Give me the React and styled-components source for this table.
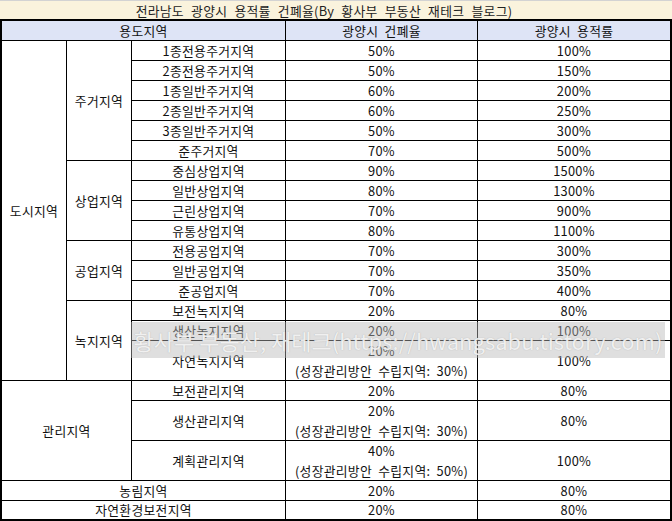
import React from "react";
import styled, { createGlobalStyle } from "styled-components";

const Global = createGlobalStyle`
  html, body { margin: 0; padding: 0; background: #fff; }
  body { font-family: "Noto Sans CJK KR", "Noto Sans", sans-serif; color: #111; }
`;

const Page = styled.div`
  position: relative;
  width: 672px;
`;

const Title = styled.div`
  height: 18px;
  border-top: 1px solid #d3d3d3;
  background: #faf3dd;
  display: flex;
  align-items: center;
  justify-content: center;
  padding-right: 24px;
  font-size: 12.8px;
  letter-spacing: 0.3px;
  word-spacing: 4px;
  color: #222;
  white-space: nowrap;
`;

const Table = styled.div`
  display: grid;
  grid-template-columns: 64px 64px 153px 191px 192px;
  grid-template-rows: repeat(24, 19px) 18px;
  gap: 1px;
  background: #000;
  border: 2px solid #000;
`;

const Cell = styled.div`
  background: ${(p) => (p.$head ? "#dee4f6" : "#fff")};
  grid-column: ${(p) => p.$col} / span ${(p) => p.$cs || 1};
  grid-row: ${(p) => p.$row} / span ${(p) => p.$rs || 1};
  display: flex;
  flex-direction: column;
  align-items: center;
  justify-content: center;
  font-size: 12.8px;
  letter-spacing: 0.3px;
  word-spacing: 3px;
  line-height: 20px;
  white-space: nowrap;
  overflow: visible;
  min-width: 0;
`;

const Watermark = styled.div`
  position: absolute;
  left: 131px;
  top: 322px;
  width: 534px;
  height: 36px;
  background: rgba(185, 185, 185, 0.45);
  display: flex;
  align-items: center;
  justify-content: center;
  font-size: 22px;
  color: rgba(252, 252, 252, 0.85);
  text-shadow: 0 0 1px rgba(140, 140, 140, 0.6);
  white-space: nowrap;
  pointer-events: none;
`;

const rows = [
  ["1종전용주거지역", ["50%"], "100%"],
  ["2종전용주거지역", ["50%"], "150%"],
  ["1종일반주거지역", ["60%"], "200%"],
  ["2종일반주거지역", ["60%"], "250%"],
  ["3종일반주거지역", ["50%"], "300%"],
  ["준주거지역", ["70%"], "500%"],
  ["중심상업지역", ["90%"], "1500%"],
  ["일반상업지역", ["80%"], "1300%"],
  ["근린상업지역", ["70%"], "900%"],
  ["유통상업지역", ["80%"], "1100%"],
  ["전용공업지역", ["70%"], "300%"],
  ["일반공업지역", ["70%"], "350%"],
  ["준공업지역", ["70%"], "400%"],
  ["보전녹지지역", ["20%"], "80%"],
  ["생산녹지지역", ["20%"], "100%"],
  ["자연녹지지역", ["20%", "(성장관리방안 수립지역: 30%)"], "100%", 2],
  ["보전관리지역", ["20%"], "80%"],
  ["생산관리지역", ["20%", "(성장관리방안 수립지역: 30%)"], "80%", 2],
  ["계획관리지역", ["40%", "(성장관리방안 수립지역: 50%)"], "100%", 2],
];

export default function App() {
  let r = 2;
  const body = rows.map(([name, bc, far, span = 1]) => {
    const row = r;
    r += span;
    return (
      <React.Fragment key={name}>
        <Cell $col={3} $row={row} $rs={span}>{name}</Cell>
        <Cell $col={4} $row={row} $rs={span}>
          {bc.map((t) => (
            <span key={t}>{t}</span>
          ))}
        </Cell>
        <Cell $col={5} $row={row} $rs={span}>{far}</Cell>
      </React.Fragment>
    );
  });

  return (
    <Page>
      <Global />
      <Title>전라남도 광양시 용적률 건폐율(By 황사부 부동산 재테크 블로그)</Title>
      <Table>
        <Cell $head $col={1} $cs={3} $row={1}>용도지역</Cell>
        <Cell $head $col={4} $row={1}>광양시 건폐율</Cell>
        <Cell $head $col={5} $row={1}>광양시 용적률</Cell>
        <Cell $col={1} $row={2} $rs={17}>도시지역</Cell>
        <Cell $col={2} $row={2} $rs={6}>주거지역</Cell>
        <Cell $col={2} $row={8} $rs={4}>상업지역</Cell>
        <Cell $col={2} $row={12} $rs={3}>공업지역</Cell>
        <Cell $col={2} $row={15} $rs={4}>녹지지역</Cell>
        <Cell $col={1} $cs={2} $row={19} $rs={5}>관리지역</Cell>
        {body}
        <Cell $col={1} $cs={3} $row={24}>농림지역</Cell>
        <Cell $col={4} $row={24}>20%</Cell>
        <Cell $col={5} $row={24}>80%</Cell>
        <Cell $col={1} $cs={3} $row={25}>자연환경보전지역</Cell>
        <Cell $col={4} $row={25}>20%</Cell>
        <Cell $col={5} $row={25}>80%</Cell>
      </Table>
      <Watermark>황사부 부동산, 재테크(https://hwangsabu.tistory.com)</Watermark>
    </Page>
  );
}
